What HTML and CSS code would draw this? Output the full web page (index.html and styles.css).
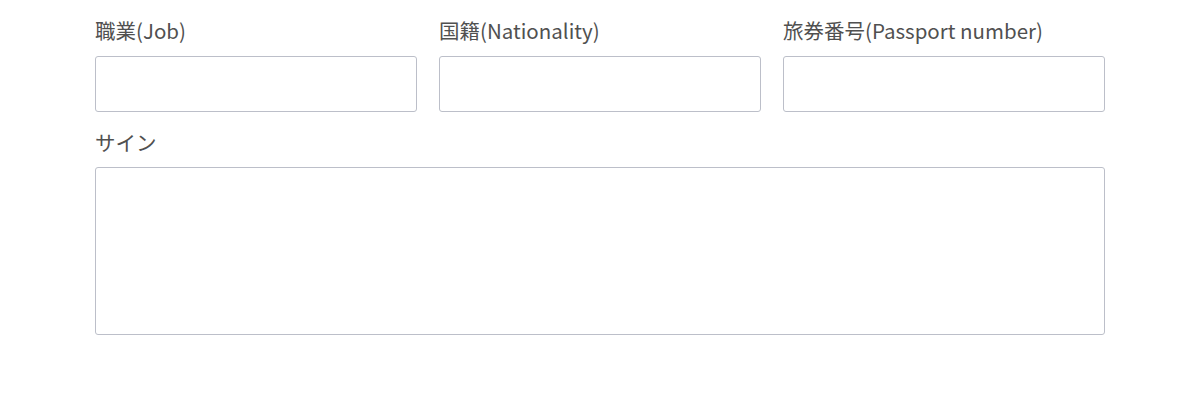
FILE: index.html
```html
<!DOCTYPE html>
<html lang="ja">
<head>
<meta charset="utf-8">
<link rel="stylesheet" href="styles.css">
</head>
<body>
<form class="form">
  <div class="row">
    <label class="field">
      <span class="label">職業(Job)</span>
      <input class="input" type="text">
    </label>
    <label class="field">
      <span class="label">国籍(Nationality)</span>
      <input class="input" type="text">
    </label>
    <label class="field">
      <span class="label">旅券番号(Passport number)</span>
      <input class="input" type="text">
    </label>
  </div>
  <label class="field sign">
    <span class="label">サイン</span>
    <textarea class="area"></textarea>
  </label>
</form>
</body>
</html>
```
FILE: styles.css
```css
html, body {
  margin: 0;
  padding: 0;
  background: #ffffff;
}
body {
  font-family: "Noto Sans CJK JP", "Noto Sans", sans-serif;
  color: #4a4a4a;
}
.form {
  width: 1010px;
  margin: 0 0 0 95px;
  padding-top: 17px;
}
.row {
  display: grid;
  grid-template-columns: repeat(3, 1fr);
  column-gap: 22px;
}
.field {
  display: flex;
  flex-direction: column;
}
.label {
  font-size: 20.5px;
  line-height: 26px;
  height: 26px;
  color: #505050;
  margin-bottom: 13px;
  white-space: nowrap;
}
.input {
  box-sizing: border-box;
  height: 56px;
  border: 1.5px solid #bcbfc9;
  border-radius: 3px;
  background: #fff;
  margin: 0;
  padding: 0 10px;
  outline: none;
}
.sign {
  margin-top: 17px;
}
.sign .label {
  margin-bottom: 12px;
}
.area {
  box-sizing: border-box;
  height: 168px;
  border: 1.5px solid #bcbfc9;
  border-radius: 3px;
  background: #fff;
  margin: 0;
  padding: 10px;
  resize: none;
  outline: none;
}
```
